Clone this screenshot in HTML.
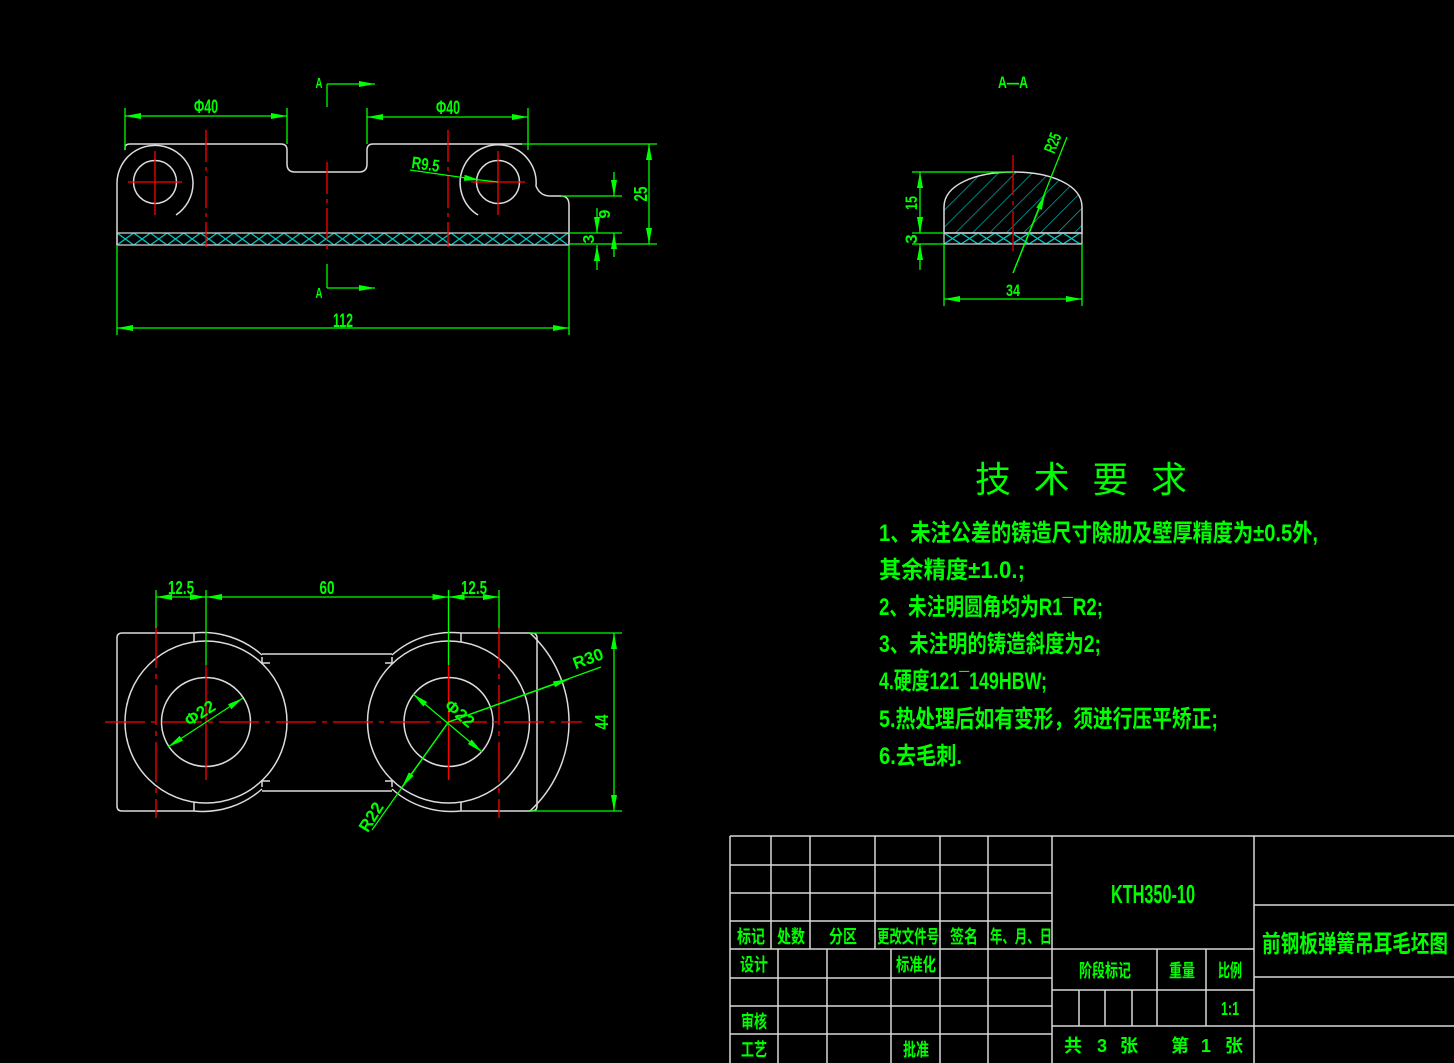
<!DOCTYPE html>
<html><head><meta charset="utf-8"><style>
html,body{margin:0;padding:0;background:#000;}
svg{display:block}
text{font-family:"Liberation Sans","Noto Sans CJK SC",sans-serif;fill:#00ff00;}
.b{font-weight:bold}
</style></head><body>
<svg width="1454" height="1063" viewBox="0 0 1454 1063" xmlns="http://www.w3.org/2000/svg">
<defs>
<marker id="ar" viewBox="0 0 16 6" refX="16" refY="3" markerWidth="16" markerHeight="6" markerUnits="userSpaceOnUse" orient="auto-start-reverse"><path d="M0,0 L16,3 L0,6 z" fill="#00ff00"/></marker>
<pattern id="xh" width="16.7" height="12" patternUnits="userSpaceOnUse" x="117" y="233"><path d="M0,0 L16.7,12 M0,12 L16.7,0" stroke="#00c8c8" stroke-width="1.3"/></pattern>
<pattern id="xh2" width="17" height="11" patternUnits="userSpaceOnUse" x="944" y="233"><path d="M0,0 L17,11 M0,11 L17,0" stroke="#00c8c8" stroke-width="1.3"/></pattern>
<pattern id="dh" width="12" height="12" patternUnits="userSpaceOnUse" patternTransform="rotate(45)"><path d="M0,0 V12" stroke="#00c8c8" stroke-width="1.3"/></pattern>
</defs>
<rect width="1454" height="1063" fill="#000"/>

<!-- TOP VIEW -->
<g fill="none" stroke="#dcdcdc" stroke-width="1.5">
<path d="M117,183 A38,38 0 1 1 176,215"/>
<path d="M117,183 V245"/>
<path d="M125,150 V148 Q125,144 130,144 H281 Q287,144 287,150 V164 Q287,172 295,172 H359 Q367,172 367,164 V150 Q367,144 373,144 H522"/>
<path d="M478,215 A38,38 0 1 1 536,186 Q540,196 550,196 H561 Q569,196 569,205 V245"/>
<circle cx="155" cy="182" r="21.5"/>
<circle cx="498" cy="182" r="21.5"/>
</g>
<rect x="117" y="233" width="452" height="12" fill="url(#xh)" stroke="#cccccc" stroke-width="1.3"/>
<g stroke="#ff0000" stroke-width="1.3" fill="none">
<path d="M128,182 H182 M155,151 V215 M471,182 H525 M498,151 V215"/>
<path d="M206,130 V247 M327,162 V250 M448,130 V247" stroke-dasharray="32 5 4 5"/>
</g>
<g stroke="#00ff00" stroke-width="1.3" fill="none">
<path d="M125,108 V150 M287,108 V144 M367,108 V144 M528,108 V150"/>
<path d="M125,116 H287" marker-start="url(#ar)" marker-end="url(#ar)"/>
<path d="M367,117 H528" marker-start="url(#ar)" marker-end="url(#ar)"/>
<path d="M327,84 V107 M327,264 V288"/>
<path d="M327,84 H375" marker-end="url(#ar)"/>
<path d="M327,288 H375" marker-end="url(#ar)"/>
<path d="M522,144 H657 M569,244 H657 M561,196 H622 M569,233 H622"/>
<path d="M649,144 V244" marker-start="url(#ar)" marker-end="url(#ar)"/>
<path d="M614,172 V196" marker-end="url(#ar)"/>
<path d="M614,257 V233" marker-end="url(#ar)"/>
<path d="M597,208 V233" marker-end="url(#ar)"/>
<path d="M597,270 V245" marker-end="url(#ar)"/>
<path d="M117,245 V335 M569,245 V335"/>
<path d="M117,328 H569" marker-start="url(#ar)" marker-end="url(#ar)"/>
<path d="M410,170 L480,180" marker-end="url(#ar)"/>
<path d="M480,180 L498,182"/>
</g>
<g class="b">
<text x="206" y="113" font-size="19" text-anchor="middle" textLength="24" lengthAdjust="spacingAndGlyphs">Φ40</text>
<text x="448" y="114" font-size="19" text-anchor="middle" textLength="24" lengthAdjust="spacingAndGlyphs">Φ40</text>
<text x="319" y="88" font-size="15" text-anchor="middle" textLength="7" lengthAdjust="spacingAndGlyphs">A</text>
<text x="319" y="298" font-size="15" text-anchor="middle" textLength="7" lengthAdjust="spacingAndGlyphs">A</text>
<text x="343" y="327" font-size="19" text-anchor="middle" textLength="20" lengthAdjust="spacingAndGlyphs">112</text>
<text x="411" y="168" font-size="17" textLength="28" lengthAdjust="spacingAndGlyphs" transform="rotate(8 411 168)">R9.5</text>
<text font-size="18" transform="translate(647,194) rotate(-90)" text-anchor="middle" textLength="15" lengthAdjust="spacingAndGlyphs">25</text>
<text font-size="16" transform="translate(610,214) rotate(-90)" text-anchor="middle">9</text>
<text font-size="16" transform="translate(594,239) rotate(-90)" text-anchor="middle">3</text>
</g>

<!-- SECTION A-A -->
<text class="b" x="1013" y="88" font-size="17" text-anchor="middle" textLength="30" lengthAdjust="spacingAndGlyphs">A—A</text>
<path d="M944,233 V207 C944,185 975,172 1013,172 C1051,172 1082,185 1082,207 V233 Z" fill="url(#dh)" stroke="#dcdcdc" stroke-width="1.5"/>
<rect x="944" y="233" width="138" height="11" fill="url(#xh2)" stroke="#cccccc" stroke-width="1.3"/>
<path d="M1013,155 V255" stroke="#cc0000" stroke-width="1.5" stroke-dasharray="40 6 4 6"/>
<g stroke="#00ff00" stroke-width="1.3" fill="none">
<path d="M912,172 H1013 M912,233 H944 M912,244 H944"/>
<path d="M920,233 V172" marker-start="url(#ar)" marker-end="url(#ar)"/>
<path d="M920,218 V233" marker-end="url(#ar)"/>
<path d="M920,270 V244" marker-end="url(#ar)"/>
<path d="M944,244 V306 M1082,244 V306"/>
<path d="M944,299 H1082" marker-start="url(#ar)" marker-end="url(#ar)"/>
<path d="M1013,273 L1067,137"/>
<path d="M1013,273 L1045,194" marker-end="url(#ar)"/>
</g>
<g class="b">
<text font-size="17" transform="translate(917,203) rotate(-90)" text-anchor="middle" textLength="14" lengthAdjust="spacingAndGlyphs">15</text>
<text font-size="17" transform="translate(917,239) rotate(-90)" text-anchor="middle">3</text>
<text x="1013" y="296" font-size="17" text-anchor="middle" textLength="14" lengthAdjust="spacingAndGlyphs">34</text>
<text font-size="17" transform="translate(1058,145) rotate(-68)" text-anchor="middle" textLength="20" lengthAdjust="spacingAndGlyphs">R25</text>
</g>

<!-- BOTTOM VIEW -->
<g fill="none" stroke="#dcdcdc" stroke-width="1.5">
<path d="M194,633 H122 Q117,633 117,638 V806 Q117,811 122,811 H194"/>
<path d="M194,633 V642 M194,802 V811 M461,633 V642 M461,802 V811"/>
<path d="M194,633 A89,89 0 0 1 262,655"/>
<path d="M194,811 A89,89 0 0 0 262,789"/>
<path d="M392,655 A89,89 0 0 1 461,633 H532 Q537,633 537,638 V806 Q537,811 532,811 H461 A89,89 0 0 1 392,789"/>
<path d="M262,654 H392 M262,791 H392"/>
<path d="M262,657 V663 H270 M392,657 V663 H385 M262,787 V781 H270 M392,787 V781 H385"/>
<path d="M530,633 A121,121 0 0 1 530,811"/>
<circle cx="206" cy="722" r="81"/>
<circle cx="448.5" cy="722" r="81"/>
<circle cx="206" cy="722" r="44.5"/>
<circle cx="448.5" cy="722" r="44.5"/>
</g>
<g stroke="#ff0000" stroke-width="1.3" fill="none">
<path d="M105,722 H582" stroke-dasharray="40 6 5 6"/>
<path d="M156,628 V818 M499,628 V818" stroke-dasharray="40 6 5 6"/>
<path d="M206,665 V780 M448.5,665 V780"/>
</g>
<g stroke="#00ff00" stroke-width="1.3" fill="none">
<path d="M156,590 V628 M499,590 V628 M206,590 V665 M448.5,590 V665"/>
<path d="M156,597 H206" marker-start="url(#ar)" marker-end="url(#ar)"/>
<path d="M206,597 H448.5" marker-start="url(#ar)" marker-end="url(#ar)"/>
<path d="M448.5,597 H499" marker-start="url(#ar)" marker-end="url(#ar)"/>
<path d="M530,633 H622 M530,811 H622"/>
<path d="M614,633 V811" marker-start="url(#ar)" marker-end="url(#ar)"/>
<path d="M168,747 L243,698" marker-start="url(#ar)" marker-end="url(#ar)"/>
<path d="M413,694 L482,752" marker-start="url(#ar)" marker-end="url(#ar)"/>
<path d="M448.5,722 L601,667"/>
<path d="M448.5,722 L569,679" marker-end="url(#ar)"/>
<path d="M448.5,722 L372,830"/>
<path d="M448.5,722 L402,787" marker-end="url(#ar)"/>
</g>
<g class="b">
<text x="181" y="594" font-size="18" text-anchor="middle" textLength="26" lengthAdjust="spacingAndGlyphs">12.5</text>
<text x="327" y="594" font-size="18" text-anchor="middle" textLength="15" lengthAdjust="spacingAndGlyphs">60</text>
<text x="474" y="594" font-size="18" text-anchor="middle" textLength="26" lengthAdjust="spacingAndGlyphs">12.5</text>
<text font-size="18" transform="translate(608,722) rotate(-90)" text-anchor="middle" textLength="15" lengthAdjust="spacingAndGlyphs">44</text>
<text font-size="17" transform="translate(203,718) rotate(-33)" text-anchor="middle">Φ22</text>
<text font-size="17" transform="translate(456,718) rotate(40)" text-anchor="middle">Φ22</text>
<text font-size="17" transform="translate(590,664) rotate(-20)" text-anchor="middle">R30</text>
<text font-size="17" transform="translate(376,820) rotate(-58)" text-anchor="middle">R22</text>
</g>

<!-- TECH REQUIREMENTS -->
<text x="975" y="492" font-size="36" textLength="212" lengthAdjust="spacing">技术要求</text>
<g font-size="24" class="b">
<text x="879" y="541" textLength="439" lengthAdjust="spacingAndGlyphs">1、未注公差的铸造尺寸除肋及壁厚精度为±0.5外,</text>
<text x="879" y="578" textLength="146" lengthAdjust="spacingAndGlyphs">其余精度±1.0.;</text>
<text x="879" y="615" textLength="224" lengthAdjust="spacingAndGlyphs">2、未注明圆角均为R1¯R2;</text>
<text x="879" y="652" textLength="222" lengthAdjust="spacingAndGlyphs">3、未注明的铸造斜度为2;</text>
<text x="879" y="689" textLength="168" lengthAdjust="spacingAndGlyphs">4.硬度121¯149HBW;</text>
<text x="879" y="727" textLength="339" lengthAdjust="spacingAndGlyphs">5.热处理后如有变形，须进行压平矫正;</text>
<text x="879" y="764" textLength="83" lengthAdjust="spacingAndGlyphs">6.去毛刺.</text>
</g>

<!-- TITLE BLOCK -->
<g stroke="#d8d8d8" stroke-width="1.5" fill="none">
<path d="M730,836 H1454 M730,836 V1063 M1052,836 V1063 M1254,836 V1063"/>
<path d="M730,865 H1052 M730,893 H1052 M730,921 H1052 M730,949 H1254 M730,978 H1052 M730,1006 H1052 M730,1034 H1052"/>
<path d="M771,836 V949 M810,836 V949 M875,836 V949 M940,836 V1063 M988,836 V1063"/>
<path d="M778,949 V1063 M827,949 V1063 M891,949 V1063"/>
<path d="M1052,990 H1254 M1052,1026 H1454 M1157,949 V1026 M1206,949 V1026 M1079,990 V1026 M1105,990 V1026 M1132,990 V1026"/>
<path d="M1254,905 H1454 M1254,977 H1454"/>
</g>
<g font-size="18" text-anchor="middle" class="b">
<text x="751" y="943" textLength="28" lengthAdjust="spacingAndGlyphs">标记</text>
<text x="791" y="943" textLength="28" lengthAdjust="spacingAndGlyphs">处数</text>
<text x="843" y="943" textLength="28" lengthAdjust="spacingAndGlyphs">分区</text>
<text x="908" y="943" textLength="62" lengthAdjust="spacingAndGlyphs">更改文件号</text>
<text x="964" y="943" textLength="28" lengthAdjust="spacingAndGlyphs">签名</text>
<text x="1021" y="943" textLength="62" lengthAdjust="spacingAndGlyphs">年、月、日</text>
<text x="754" y="971" textLength="28" lengthAdjust="spacingAndGlyphs">设计</text>
<text x="916" y="971" textLength="40" lengthAdjust="spacingAndGlyphs">标准化</text>
<text x="754" y="1028" textLength="26" lengthAdjust="spacingAndGlyphs">审核</text>
<text x="754" y="1056" textLength="26" lengthAdjust="spacingAndGlyphs">工艺</text>
<text x="916" y="1056" textLength="26" lengthAdjust="spacingAndGlyphs">批准</text>
<text x="1105" y="977" textLength="52" lengthAdjust="spacingAndGlyphs">阶段标记</text>
<text x="1182" y="977" textLength="26" lengthAdjust="spacingAndGlyphs">重量</text>
<text x="1230" y="977" textLength="24" lengthAdjust="spacingAndGlyphs">比例</text>
<text x="1230" y="1015" textLength="18" lengthAdjust="spacingAndGlyphs">1:1</text>
<text x="1073" y="1052">共</text>
<text x="1102" y="1052">3</text>
<text x="1129" y="1052">张</text>
<text x="1180" y="1052">第</text>
<text x="1206" y="1052">1</text>
<text x="1234" y="1052">张</text>
</g>
<text class="b" x="1153" y="903" font-size="26" text-anchor="middle" textLength="84" lengthAdjust="spacingAndGlyphs">KTH350-10</text>
<text class="b" x="1262" y="952" font-size="24" textLength="186" lengthAdjust="spacingAndGlyphs">前钢板弹簧吊耳毛坯图</text>
</svg>
</body></html>
